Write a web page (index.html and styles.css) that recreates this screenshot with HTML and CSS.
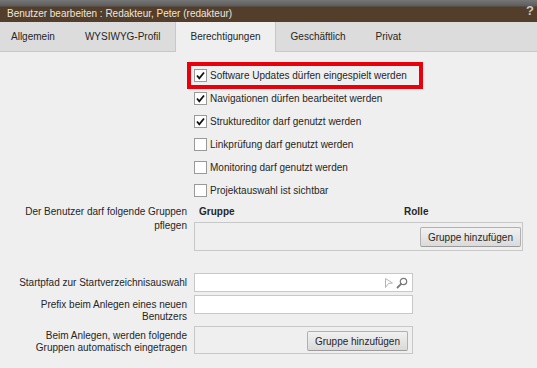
FILE: index.html
```html
<!DOCTYPE html>
<html lang="de">
<head>
  <meta charset="UTF-8" />
  <meta name="viewport" content="width=device-width, initial-scale=1.0" />
  <title>Benutzer bearbeiten</title>
  <link rel="stylesheet" href="styles.css">
</head>
<body>
  <div class="dialog">
    <div class="titlebar">
      <span class="title">Benutzer bearbeiten : Redakteur, Peter (redakteur)</span>
      <span class="help">?</span>
    </div>

    <ul class="tabs">
      <li class="tab first">Allgemein</li>
      <li class="tab">WYSIWYG-Profil</li>
      <li class="tab active">Berechtigungen</li>
      <li class="tab">Geschäftlich</li>
      <li class="tab">Privat</li>
    </ul>

    <div class="content">
      <div class="form-row">
        <div class="form-label"></div>
        <div class="checks">
          <label class="check-row highlight">
            <span class="checkbox checked"><svg viewBox="0 0 11 11"><path d="M2 5.5 L4.3 8.3 L9 2.5" /></svg></span>
            Software Updates dürfen eingespielt werden
          </label>
          <label class="check-row">
            <span class="checkbox checked"><svg viewBox="0 0 11 11"><path d="M2 5.5 L4.3 8.3 L9 2.5" /></svg></span>
            Navigationen dürfen bearbeitet werden
          </label>
          <label class="check-row">
            <span class="checkbox checked"><svg viewBox="0 0 11 11"><path d="M2 5.5 L4.3 8.3 L9 2.5" /></svg></span>
            Struktureditor darf genutzt werden
          </label>
          <label class="check-row">
            <span class="checkbox"></span>
            Linkprüfung darf genutzt werden
          </label>
          <label class="check-row">
            <span class="checkbox"></span>
            Monitoring darf genutzt werden
          </label>
          <label class="check-row">
            <span class="checkbox"></span>
            Projektauswahl ist sichtbar
          </label>
        </div>
      </div>

      <div class="form-row groups">
        <div class="form-label">Der Benutzer darf folgende Gruppen pflegen</div>
        <div class="group-table">
          <div class="group-head">
            <span>Gruppe</span>
            <span>Rolle</span>
          </div>
          <div class="group-box">
            <button type="button" class="btn">Gruppe hinzufügen</button>
          </div>
        </div>
      </div>

      <div class="form-row startpath">
        <div class="form-label">Startpfad zur Startverzeichnisauswahl</div>
        <div class="input with-icons">
          <svg class="icon" width="10" height="12" viewBox="0 0 10 12">
            <path d="M1.5 1.5 L8.5 6 L4.5 6.5 L1.5 10.5 Z" fill="none" stroke="#b4b4b4" stroke-width="1" stroke-linejoin="round" />
          </svg>
          <svg class="icon" width="12" height="12" viewBox="0 0 12 12">
            <circle cx="7.5" cy="4.5" r="3.2" fill="none" stroke="#7a7a7a" stroke-width="1.2" />
            <path d="M5.2 6.8 L1.5 10.5" stroke="#7a7a7a" stroke-width="1.8" stroke-linecap="round" />
          </svg>
        </div>
      </div>

      <div class="form-row prefix">
        <div class="form-label">Prefix beim Anlegen eines neuen Benutzers</div>
        <div class="input"></div>
      </div>

      <div class="form-row autogroups">
        <div class="form-label">Beim Anlegen, werden folgende Gruppen automatisch eingetragen</div>
        <div class="group-box small">
          <button type="button" class="btn">Gruppe hinzufügen</button>
        </div>
      </div>
    </div>
  </div>
</body>
</html>
```

FILE: styles.css
```css
:root {
  --text: #262626;
  --bg: #efefef;
  --tabbar: #dcdcdc;
  --line: #c8c8c8;
  --brown: #533e2b;
  --red: #e8000b;
}

* {
  box-sizing: border-box;
}

body {
  margin: 0;
  background-color: var(--bg);
  color: var(--text);
  font-family: "Liberation Sans", Arial, sans-serif;
  font-size: 10px;
}

.titlebar {
  display: flex;
  justify-content: space-between;
  align-items: flex-start;
  height: 22px;
  padding: 7px 3px 0 7px;
  background: linear-gradient(#767676 0, #5c5c5c 6px, var(--brown) 7px, var(--brown) 100%);
  color: #ece6df;
  line-height: 13px;
}

.help {
  margin-top: -3px;
  font-size: 13px;
  font-weight: bold;
  color: #c9c9c9;
}

.tabs {
  display: flex;
  margin: 0;
  padding: 0;
  list-style: none;
  height: 30px;
  background-color: var(--tabbar);
  border-bottom: 1px solid var(--line);
}

.tab {
  padding: 0 14px;
  line-height: 29px;
  border-left: 1px solid transparent;
  border-right: 1px solid transparent;
}

.tab.first {
  padding-left: 10px;
}

.tab.active {
  height: 30px;
  background-color: var(--bg);
  border-color: var(--line);
}

.content {
  padding: 12px 0 0 10px;
}

.form-row {
  display: grid;
  grid-template-columns: 177px auto;
  column-gap: 7px;
  align-items: start;
}

.form-label {
  text-align: right;
  line-height: 12px;
  padding-top: 4px;
}

.checks {
  display: flex;
  flex-direction: column;
  align-items: flex-start;
}

.check-row {
  display: flex;
  align-items: center;
  height: 23px;
}

.check-row.highlight {
  height: 19px;
  margin: 2px 0 2px -3px;
  padding: 0 12px 0 3px;
  outline: 4px solid var(--red);
}

.checkbox {
  display: inline-flex;
  width: 13px;
  height: 13px;
  margin-right: 3px;
  padding: 0;
  background-color: #fff;
  border: 1px solid #9a9a9a;
}

.checkbox svg {
  width: 11px;
  height: 11px;
}

.checkbox path {
  fill: none;
  stroke: #111;
  stroke-width: 1.8;
}

.groups {
  margin-top: 3px;
}

.groups .form-label {
  line-height: 14px;
  padding-top: 0;
}

.group-table {
  width: 329px;
}

.group-head {
  display: grid;
  grid-template-columns: 205px auto;
  height: 14px;
  padding-left: 5px;
  line-height: 14px;
  font-weight: bold;
}

.group-box {
  display: flex;
  justify-content: flex-end;
  margin-top: 3px;
  padding: 4px 1px 3px 0;
  border: 1px solid var(--line);
}

.group-box.small {
  width: 219px;
  margin-top: 0;
  padding: 4px 4px 2px 0;
}

.btn {
  height: 20px;
  padding: 0 7px;
  font-family: inherit;
  font-size: 10px;
  color: var(--text);
  background: linear-gradient(#f1f1f1, #dadada);
  border: 1px solid #b0b0b0;
  border-bottom-color: #9c9c9c;
  border-radius: 2px;
}

.startpath {
  margin-top: 22px;
}

.prefix {
  margin-top: 3px;
}

.autogroups {
  margin-top: 3px;
}

.input {
  display: flex;
  justify-content: flex-end;
  align-items: center;
  gap: 2px;
  width: 219px;
  height: 19px;
  padding-right: 4px;
  background-color: #fff;
  border: 1px solid var(--line);
}
```
